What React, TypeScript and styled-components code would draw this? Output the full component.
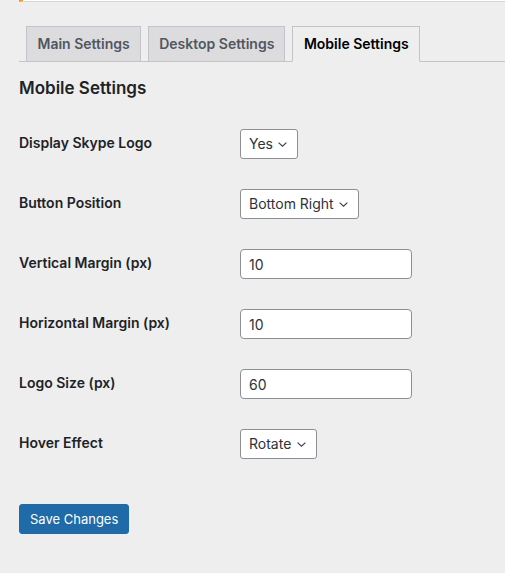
import React from "react";
import styled, { createGlobalStyle } from "styled-components";

const GlobalStyle = createGlobalStyle`
  body {
    margin: 0;
    background: #eeeeee;
    font-family: Inter, "Noto Sans", sans-serif;
    color: #1d2327;
  }
`;

const Page = styled.div`
  padding-left: 19px;
  min-height: 573px;
`;

const Notice = styled.div`
  height: 1px;
  background: #ffffff;
  border-left: 4px solid #f29a2e;
  border-bottom: 1px solid #d6d6d8;
`;

const TabBar = styled.nav`
  display: flex;
  gap: 7px;
  margin-top: 24px;
  padding-left: 7px;
  border-bottom: 1px solid #c3c4c7;
`;

const Tab = styled.a<{ $active?: boolean }>`
  display: block;
  padding: 5px 10px 5px 10.5px;
  margin-bottom: -1px;
  border: 1px solid #c3c4c7;
  border-bottom-color: ${(p) => (p.$active ? "#eeeeee" : "#c3c4c7")};
  background: ${(p) => (p.$active ? "#eeeeee" : "#dcdcde")};
  color: ${(p) => (p.$active ? "#000000" : "#50575e")};
  font-size: 14px;
  line-height: 24px;
  font-weight: 600;
  text-decoration: none;
`;

const Heading = styled.h2`
  margin: 15px 0 15px;
  font-size: 17px;
  line-height: 22px;
  font-weight: 600;
  color: #1d2327;
`;

const Form = styled.form``;

const Row = styled.div`
  display: grid;
  grid-template-columns: 221px 1fr;
  height: 60px;
`;

const Label = styled.label`
  padding-top: 20px;
  font-size: 14px;
  line-height: 18px;
  font-weight: 600;
  color: #1d2327;
`;

const Field = styled.div`
  padding-top: 15px;
`;

const SelectWrap = styled.span`
  position: relative;
  display: inline-block;
`;

const Select = styled.select`
  appearance: none;
  -webkit-appearance: none;
  height: 30px;
  padding: 0 24px 0 8px;
  border: 1px solid #8c8f94;
  border-radius: 3px;
  background: #ffffff;
  color: #2c3338;
  font-family: Inter, "Noto Sans", sans-serif;
  font-size: 14px;
  line-height: 28px;
`;

const Chevron = styled.svg`
  position: absolute;
  right: 11px;
  top: 13px;
  pointer-events: none;
`;

const Input = styled.input`
  box-sizing: border-box;
  width: 172px;
  height: 30px;
  padding: 0 8px;
  border: 1px solid #8c8f94;
  border-radius: 4px;
  background: #ffffff;
  color: #2c3338;
  font-family: Inter, "Noto Sans", sans-serif;
  font-size: 14px;
`;

const Submit = styled.div`
  margin-top: 30px;
`;

const Button = styled.button`
  height: 30px;
  padding: 0 10px;
  border: 1px solid #1f6aa8;
  border-radius: 3px;
  background: #1f6aa8;
  color: #ffffff;
  font-family: Inter, "Noto Sans", sans-serif;
  font-size: 13px;
  font-weight: 400;
  cursor: pointer;
`;

function Dropdown({ value, options }: { value: string; options: string[] }) {
  return (
    <SelectWrap>
      <Select defaultValue={value}>
        {options.map((o) => (
          <option key={o}>{o}</option>
        ))}
      </Select>
      <Chevron width="9" height="5" viewBox="0 0 9 5">
        <path d="M0.6 0.6 L4.5 4.2 L8.4 0.6" fill="none" stroke="#3c434a" strokeWidth="1.2" />
      </Chevron>
    </SelectWrap>
  );
}

export default function App() {
  return (
    <>
      <GlobalStyle />
      <Page>
        <Notice />
        <TabBar>
          <Tab>Main Settings</Tab>
          <Tab>Desktop Settings</Tab>
          <Tab $active>Mobile Settings</Tab>
        </TabBar>
        <Heading>Mobile Settings</Heading>
        <Form onSubmit={(e) => e.preventDefault()}>
          <Row>
            <Label>Display Skype Logo</Label>
            <Field>
              <Dropdown value="Yes" options={["Yes", "No"]} />
            </Field>
          </Row>
          <Row>
            <Label>Button Position</Label>
            <Field>
              <Dropdown
                value="Bottom Right"
                options={["Bottom Right", "Bottom Left", "Top Right", "Top Left"]}
              />
            </Field>
          </Row>
          <Row>
            <Label>Vertical Margin (px)</Label>
            <Field>
              <Input type="number" defaultValue="10" />
            </Field>
          </Row>
          <Row>
            <Label>Horizontal Margin (px)</Label>
            <Field>
              <Input type="number" defaultValue="10" />
            </Field>
          </Row>
          <Row>
            <Label>Logo Size (px)</Label>
            <Field>
              <Input type="number" defaultValue="60" />
            </Field>
          </Row>
          <Row>
            <Label>Hover Effect</Label>
            <Field>
              <Dropdown value="Rotate" options={["Rotate", "Scale", "None"]} />
            </Field>
          </Row>
          <Submit>
            <Button type="submit">Save Changes</Button>
          </Submit>
        </Form>
      </Page>
    </>
  );
}
